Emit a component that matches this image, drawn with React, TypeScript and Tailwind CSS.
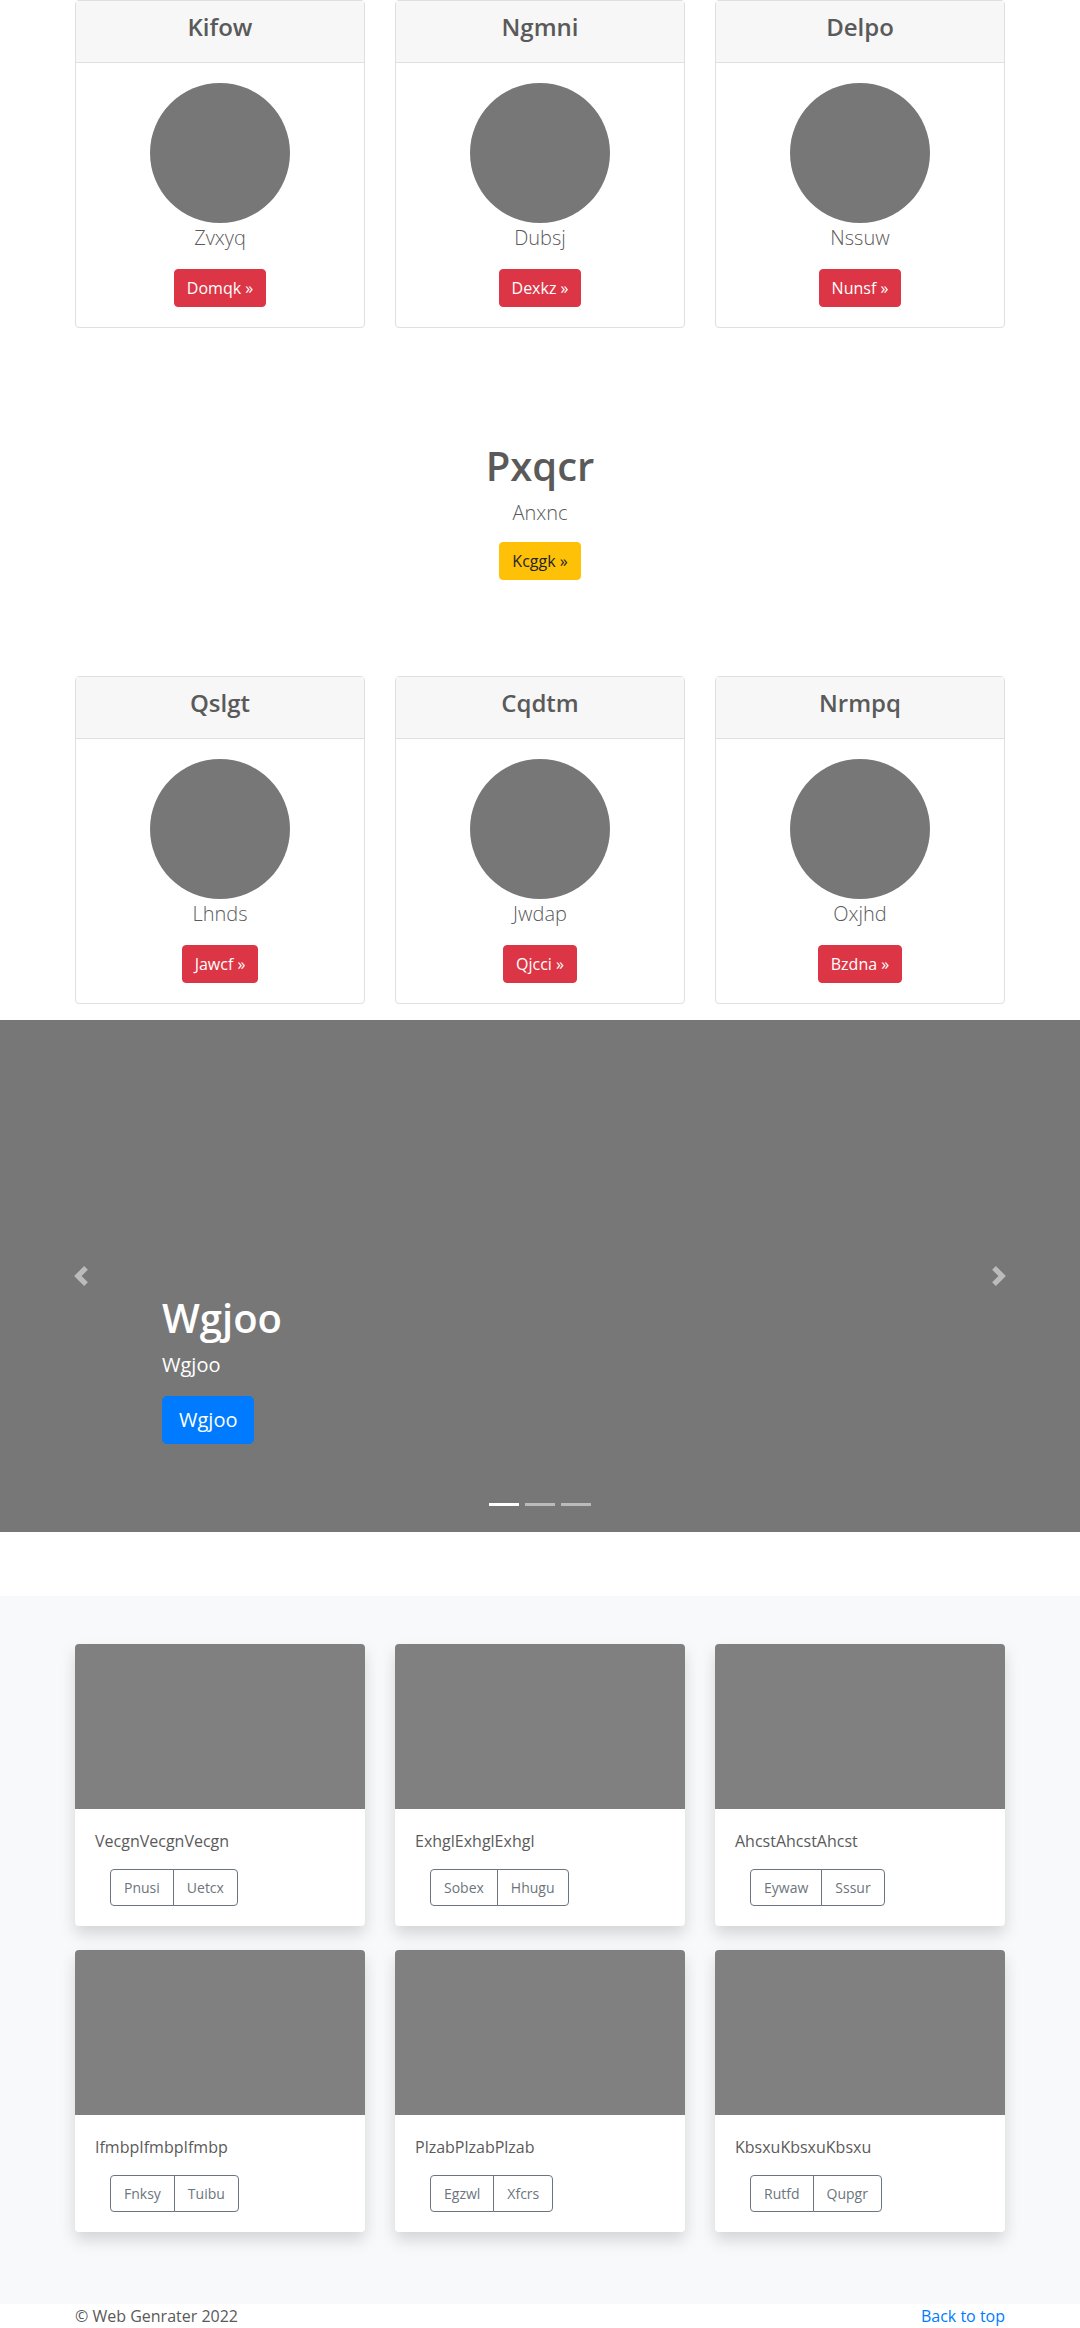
import React from "react";

const teamTop = [
  { title: "Kifow", name: "Zvxyq", cta: "Domqk" },
  { title: "Ngmni", name: "Dubsj", cta: "Dexkz" },
  { title: "Delpo", name: "Nssuw", cta: "Nunsf" },
];

const teamBottom = [
  { title: "Qslgt", name: "Lhnds", cta: "Jawcf" },
  { title: "Cqdtm", name: "Jwdap", cta: "Qjcci" },
  { title: "Nrmpq", name: "Oxjhd", cta: "Bzdna" },
];

const album = [
  { text: "VecgnVecgnVecgn", a: "Pnusi", b: "Uetcx" },
  { text: "ExhglExhglExhgl", a: "Sobex", b: "Hhugu" },
  { text: "AhcstAhcstAhcst", a: "Eywaw", b: "Sssur" },
  { text: "IfmbpIfmbpIfmbp", a: "Fnksy", b: "Tuibu" },
  { text: "PlzabPlzabPlzab", a: "Egzwl", b: "Xfcrs" },
  { text: "KbsxuKbsxuKbsxu", a: "Rutfd", b: "Qupgr" },
];

function ProfileCard({ title, name, cta }: { title: string; name: string; cta: string }) {
  return (
    <div className="rounded-[4px] border border-[#dfdfdf] bg-white text-center">
      <div className="border-b border-[#dfdfdf] bg-[#f7f7f7] px-5 py-3">
        <h4 className="mb-2 text-[24px] font-semibold leading-[1.2]">{title}</h4>
      </div>
      <div className="flex flex-col items-center p-5">
        <div className="h-[140px] w-[140px] rounded-full bg-[#777]" />
        <p className="mb-4 text-[20px] font-light leading-[1.5]">{name}</p>
        <a className="rounded-[4px] border border-[#dc3545] bg-[#dc3545] px-3 py-[6px] text-[16px] leading-[1.5] text-white">
          {cta} »
        </a>
      </div>
    </div>
  );
}

function AlbumCard({ text, a, b }: { text: string; a: string; b: string }) {
  return (
    <div className="overflow-hidden rounded-[4px] bg-white shadow-[0_0.5rem_1rem_rgba(0,0,0,0.15)]">
      <div className="h-[165px] bg-[#808080]" />
      <div className="p-5">
        <p className="mb-4 text-[16px] leading-[1.5]">{text}</p>
        <div className="ml-[15px] flex text-[14px] leading-[1.5] text-[#6c757d]">
          <span className="rounded-l-[4px] border border-[#6c757d] px-[13px] py-[7px]">{a}</span>
          <span className="-ml-px rounded-r-[4px] border border-[#6c757d] px-[13px] py-[7px]">{b}</span>
        </div>
      </div>
    </div>
  );
}

function Chevron({ dir }: { dir: "prev" | "next" }) {
  return (
    <svg width="20" height="20" viewBox="0 0 8 8" className="opacity-50">
      <path
        fill="#fff"
        d={
          dir === "prev"
            ? "M5.25 0l-4 4 4 4 1.5-1.5L4.25 4l2.5-2.5L5.25 0z"
            : "M2.75 0l-1.5 1.5L3.75 4l-2.5 2.5L2.75 8l4-4-4-4z"
        }
      />
    </svg>
  );
}

export default function App() {
  return (
    <div className="min-h-[2328px] bg-white font-['Segoe_UI','Open_Sans',sans-serif] text-[16px] leading-[1.5] text-[#5a5a5a]">
      <div className="mx-auto w-[960px] px-[15px]">
        <div className="grid grid-cols-3 gap-[30px]">
          {teamTop.map((t) => (
            <ProfileCard key={t.title} {...t} />
          ))}
        </div>

        <div className="mt-[114px] flex flex-col items-center text-center">
          <h1 className="mb-2 text-[40px] font-semibold leading-[1.2]">Pxqcr</h1>
          <p className="mb-[14px] text-[20px] font-light leading-[1.5]">Anxnc</p>
          <a className="rounded-[4px] border border-[#ffc107] bg-[#ffc107] px-3 py-[6px] text-[16px] leading-[1.5] text-[#212529]">
            Kcggk »
          </a>
        </div>

        <div className="mt-[96px] grid grid-cols-3 gap-[30px]">
          {teamBottom.map((t) => (
            <ProfileCard key={t.title} {...t} />
          ))}
        </div>
      </div>

      <div className="relative mt-4 mb-16 flex h-[512px] flex-col justify-end bg-[#777] px-[162px] pb-[88px] text-white">
        <h1 className="mb-2 text-[40px] font-semibold leading-[1.2]">Wgjoo</h1>
        <p className="mb-4 text-[20px] leading-[1.5]">Wgjoo</p>
        <div>
          <a className="inline-block rounded-[4.8px] border border-[#007bff] bg-[#007bff] px-4 py-2 text-[20px] leading-[1.5] text-white">
            Wgjoo
          </a>
        </div>

        <div className="absolute inset-y-0 left-0 flex w-[15%] items-center justify-center">
          <Chevron dir="prev" />
        </div>
        <div className="absolute inset-y-0 right-0 flex w-[15%] items-center justify-center">
          <Chevron dir="next" />
        </div>
        <div className="absolute inset-x-[15%] bottom-0 mb-4 flex justify-center">
          <span className="mx-[3px] my-[10px] h-[3px] w-[30px] bg-white" />
          <span className="mx-[3px] my-[10px] h-[3px] w-[30px] bg-white opacity-50" />
          <span className="mx-[3px] my-[10px] h-[3px] w-[30px] bg-white opacity-50" />
        </div>
      </div>

      <div className="bg-[#f8f9fa] py-12">
        <div className="mx-auto grid w-[960px] grid-cols-3 gap-x-[30px] gap-y-6 px-[15px] pb-6">
          {album.map((c) => (
            <AlbumCard key={c.text} {...c} />
          ))}
        </div>
      </div>

      <footer className="mx-auto flex w-[960px] justify-between px-[15px]">
        <p className="mb-4">© Web Genrater 2022</p>
        <a className="text-[#007bff]">Back to top</a>
      </footer>
    </div>
  );
}
